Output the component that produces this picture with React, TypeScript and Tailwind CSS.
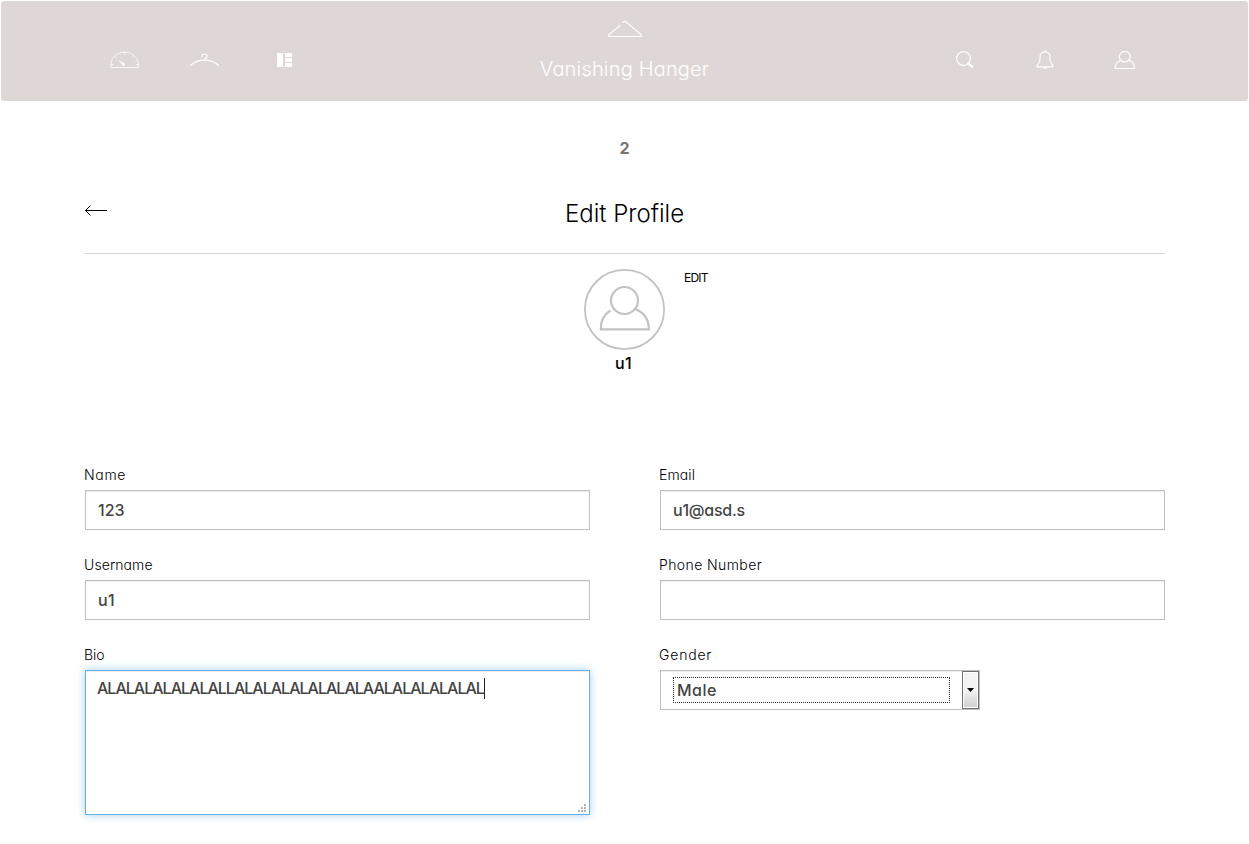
import type { ReactNode } from "react";

const inputClass =
  "flex h-10 w-full items-center border border-[#bfbfbf] bg-white pl-3 text-[16px] font-medium text-[#444] shadow-[inset_0_1px_1px_rgba(0,0,0,0.075)]";

function Field({ label, tracking, children }: { label: string; tracking: string; children: ReactNode }) {
  return (
    <div className="flex flex-col">
      <label className={`-ml-px h-[30px] text-[14px] leading-[30px] font-light text-black ${tracking}`}>{label}</label>
      {children}
    </div>
  );
}

function GaugeIcon() {
  return (
    <svg width="30" height="18" viewBox="0 0 30 18" fill="none" stroke="#fff" strokeWidth="0.8">
      <path d="M1 16.500C0 7 6 1.200 14.500 1.200S29 7 28.500 16.500Z" />
      <path d="M14.500 1v2.500M5.500 5.500l1.200 1.200M23.500 5.500l-1.200 1.200M1 13.500h2.200M26.300 13.500h2.200" />
      <path d="M7.800 8.600l7.600 4.500-1.600 2.200z" fill="#fff" stroke="none" />
    </svg>
  );
}

function HangerIcon() {
  return (
    <svg width="30" height="14" viewBox="0 0 30 14" fill="none" stroke="#fff" strokeWidth="1.200" strokeLinecap="round">
      <path d="M0.700 12.300C8 5.500 21 5.500 28.500 12.300" strokeWidth="1.200" />
      <path d="M12 3.400C11.800 0.200 17 0.300 17 3.200C17 5.200 14.500 4.600 14.500 7" />
    </svg>
  );
}

function BoardIcon() {
  return (
    <svg width="15" height="14" viewBox="0 0 15 14" fill="#fff">
      <path d="M0 0h6v14H0zM8 0h7v4H8zM8 5h7v4H8zM8 10h7v4H8z" />
    </svg>
  );
}

function SearchIcon() {
  return (
    <svg width="18" height="18" viewBox="0 0 18 18" fill="none" stroke="#fff">
      <circle cx="7.500" cy="7.500" r="6.900" strokeWidth="1.200" />
      <path d="M12.300 12.300l4 3.800" strokeWidth="2.200" strokeLinecap="round" />
    </svg>
  );
}

function BellIcon() {
  return (
    <svg width="18" height="20" viewBox="0 0 18 20" fill="none" stroke="#fff" strokeWidth="1.200">
      <path d="M1 16.800C0 14.800 4 14.500 4 9.500V7C4 3.600 6 2 9 2S14 3.600 14 7v2.500C14 14.500 18 14.800 17 16.800Z" strokeLinejoin="round" />
      <path d="M7.500 1.800a1.500 1.500 0 0 1 3 0zM7.300 17.300h3.400a1.700 1.700 0 0 1-3.400 0z" fill="#fff" stroke="none" />
    </svg>
  );
}

function UserIcon() {
  return (
    <svg width="22" height="20" viewBox="0 0 22 20" fill="none" stroke="#fff" strokeWidth="1.200">
      <circle cx="10.800" cy="6.700" r="5.400" />
      <path d="M6.200 10.500C3 12 1.200 14.500 1.200 18.500H20.500C20.500 14.500 18.800 12 15.300 10.300" />
    </svg>
  );
}

function Avatar() {
  return (
    <svg width="81" height="82" viewBox="0 0 81 82" fill="none" stroke="#c2c2c2">
      <circle cx="40.500" cy="41.500" r="39.600" strokeWidth="1.800" />
      <circle cx="40.500" cy="32.500" r="13.500" strokeWidth="2.200" />
      <path d="M26.500 42.500C20 46.500 16.500 52 16.800 61.300H64.800C64.800 52 60 44.500 51.300 41" strokeWidth="2.200" />
    </svg>
  );
}

export default function App() {
  return (
    <div
      className="h-[844px] w-full overflow-hidden bg-white p-px text-black"
      style={{ fontFamily: '"Inter", "Liberation Sans", sans-serif', fontFeatureSettings: '"cv11", "ss03"' }}
    >
      <header className="flex h-[100px] justify-between rounded-[3px] bg-[#dfd7d5] px-[83px]">
        <nav className="flex w-[240px] pt-px">
          <div className="flex h-[116px] w-20 items-center justify-center pl-0.5"><GaugeIcon /></div>
          <div className="flex h-[116px] w-20 items-center justify-center pl-0.5"><HangerIcon /></div>
          <div className="flex h-[116px] w-20 items-center justify-center"><BoardIcon /></div>
        </nav>
        <div className="flex flex-col items-center pt-[19px]">
          <svg width="36" height="19" viewBox="0 0 36 19" fill="none" stroke="#fff" strokeWidth="1.100">
            <path d="M15.500 2.800L18 1l16.500 14v1.500H1.500V15L13.500 5" />
          </svg>
          <div className="mt-[14px] text-[20px] leading-8 font-light tracking-[0.180px] text-white">Vanishing Hanger</div>
        </div>
        <nav className="flex w-[240px] pt-px">
          <div className="flex h-[116px] w-20 items-center justify-center pr-px"><SearchIcon /></div>
          <div className="flex h-[116px] w-20 items-center justify-center pr-px"><BellIcon /></div>
          <div className="flex h-[116px] w-20 items-center justify-center pr-px"><UserIcon /></div>
        </nav>
      </header>

      <main className="ml-[84px] w-[1080px]">
        <div className="mt-[35px] h-6 pr-px text-center text-[16px] leading-6 font-bold text-[#777]">2</div>
        <div className="mt-5 flex h-[74px] items-start justify-between border-b border-[#d9d3d3]">
          <svg className="mt-6" width="22" height="12" viewBox="0 0 22 12" fill="none" stroke="#000">
            <path d="M0.500 6.500H22M5.500 1.500L0.500 6.500L5.500 11.500" />
          </svg>
          <h1 className="mt-[15px] pr-px text-[24px] leading-[38px] font-light">Edit Profile</h1>
          <div className="w-[22px]" />
        </div>
        <div className="mt-3.5 grid grid-cols-[499px_81px_1fr]">
          <div />
          <Avatar />
          <div className="pl-[19px] text-[12px] leading-5 tracking-[-0.800px]">EDIT</div>
        </div>
        <div className="-mt-px h-7 pr-[3px] text-center text-[16px] leading-7 font-medium tracking-[0.400px]">u1</div>

        <div className="mt-[83px] grid grid-cols-2 gap-x-[70px] gap-y-5">
          <Field label="Name" tracking="tracking-[0.700px]"><div className={inputClass}>123</div></Field>
          <Field label="Email" tracking="tracking-[0.100px]"><div className={`${inputClass} tracking-[-0.250px]`}>u1@asd.s</div></Field>
          <Field label="Username" tracking="tracking-[0.100px]"><div className={`${inputClass} tracking-[0.400px]`}>u1</div></Field>
          <Field label="Phone Number" tracking="tracking-[0.400px]"><div className={inputClass} /></Field>
          <Field label="Bio" tracking="tracking-normal">
            <div className="flex h-[145px] flex-col justify-between border border-[#66afe9] bg-white shadow-[inset_0_1px_1px_rgba(0,0,0,0.075),0_0_8px_rgba(102,175,233,0.6)]">
              <div className="flex items-center pt-1.5 pl-[11px] text-[16px] leading-[22px] font-medium text-[#444]">
                <span className="tracking-[-0.990px]">ALALALALALALALLALALALALALALALAALALALALALAL</span>
                <span className="h-[21px] w-px bg-[#222]" />
              </div>
              <svg className="mr-[3px] mb-px self-end" width="9" height="9" viewBox="0 0 9 9" fill="#b5b5b5">
                <path d="M7 0h2v2H7zM4 3h2v2H4zM7 3h2v2H7zM1 6h2v2H1zM4 6h2v2H4zM7 6h2v2H7z" />
              </svg>
            </div>
          </Field>
          <Field label="Gender" tracking="tracking-[0.800px]">
            <div className="flex h-10 w-80 items-stretch border border-[#bfbfbf] pl-3 shadow-[inset_0_1px_1px_rgba(0,0,0,0.075)]">
              <div className="my-1.5 flex flex-1 items-center border border-dotted border-[#333] pl-[3px] text-[16px] font-medium tracking-[0.500px] text-[#444]">Male</div>
              <div className="ml-3 flex w-[17px] items-center justify-center border border-[#707070] bg-linear-to-b from-[#f3f3f3] from-50% to-[#cfcfcf] shadow-[inset_0_0_0_1px_#fff]">
                <svg width="7" height="4" viewBox="0 0 7 4"><path d="M0 0h7L3.500 4z" /></svg>
              </div>
            </div>
          </Field>
        </div>
      </main>
    </div>
  );
}
